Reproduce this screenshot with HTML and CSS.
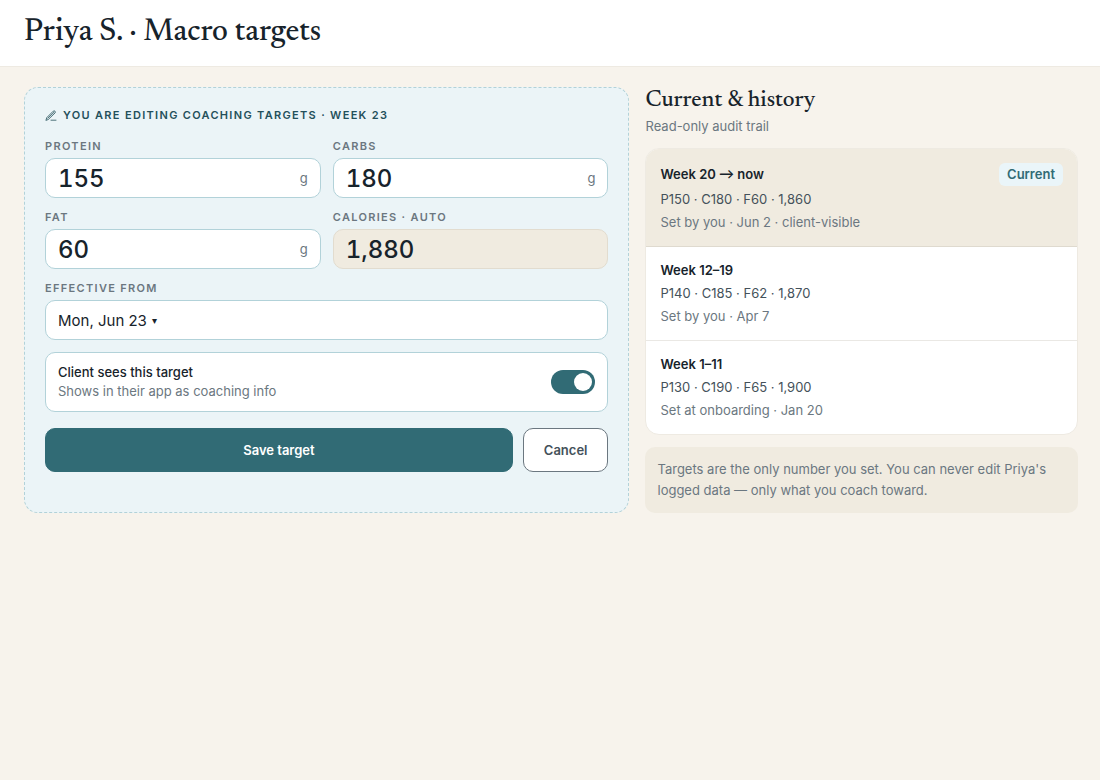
FILE: index.html
```html
<!DOCTYPE html>
<html lang="en">
<head>
    <meta charset="UTF-8">
    <meta name="viewport" content="width=device-width, initial-scale=1.0">
    <title>Priya S. · Macro targets</title>
    <link rel="stylesheet" href="styles.css">
</head>
<body>
    <header class="page-header">
        <h1>Priya S. · Macro targets</h1>
    </header>

    <main class="layout">
        <!-- Target editor -->
        <form class="editor">
            <h2 class="editor-title">
                <svg class="pen-icon" viewBox="0 0 12 12" aria-hidden="true">
                    <path d="M1 10 L1.8 7.6 L8.2 1.2 Q9.2 0.5 10 1.2 Q10.7 2 10 3 L3.5 9.3 Z M2.8 8.2 L8.8 2.4 M6 10.2 H11"/>
                </svg>
                You are editing coaching targets · Week 23
            </h2>

            <div class="fields">
                <div class="field">
                    <label for="protein">Protein</label>
                    <div class="input-box">
                        <input type="text" inputmode="numeric" id="protein" value="155">
                        <span class="unit">g</span>
                    </div>
                </div>
                <div class="field">
                    <label for="carbs">Carbs</label>
                    <div class="input-box">
                        <input type="text" inputmode="numeric" id="carbs" value="180">
                        <span class="unit">g</span>
                    </div>
                </div>
                <div class="field">
                    <label for="fat">Fat</label>
                    <div class="input-box">
                        <input type="text" inputmode="numeric" id="fat" value="60">
                        <span class="unit">g</span>
                    </div>
                </div>
                <div class="field">
                    <label for="calories">Calories · auto</label>
                    <div class="input-box auto">
                        <input type="text" id="calories" value="1,880" readonly>
                    </div>
                </div>
                <div class="field wide">
                    <label for="effective">Effective from</label>
                    <div class="input-box">
                        <select class="date-select" id="effective">
                            <option>Mon, Jun 23</option>
                        </select>
                        <span class="caret" aria-hidden="true">▾</span>
                    </div>
                </div>
            </div>

            <div class="visibility">
                <label for="visible">
                    <span class="visibility-title">Client sees this target</span>
                    <span class="visibility-hint">Shows in their app as coaching info</span>
                </label>
                <input type="checkbox" class="toggle" id="visible" checked>
            </div>

            <div class="actions">
                <button type="submit" class="btn btn-primary">Save target</button>
                <button type="button" class="btn btn-secondary">Cancel</button>
            </div>
        </form>

        <!-- Audit trail -->
        <section class="history">
            <h2>Current &amp; history</h2>
            <p class="subtitle">Read-only audit trail</p>

            <ul class="history-list">
                <li class="history-item current">
                    <div class="history-head">
                        <h3>Week 20 <span class="arrow">→</span> now</h3>
                        <span class="badge">Current</span>
                    </div>
                    <p class="macros">P150 · C180 · F60 · 1,860</p>
                    <p class="meta">Set by you · Jun 2 · client-visible</p>
                </li>
                <li class="history-item">
                    <h3>Week 12–19</h3>
                    <p class="macros">P140 · C185 · F62 · 1,870</p>
                    <p class="meta">Set by you · Apr 7</p>
                </li>
                <li class="history-item">
                    <h3>Week 1–11</h3>
                    <p class="macros">P130 · C190 · F65 · 1,900</p>
                    <p class="meta">Set at onboarding · Jan 20</p>
                </li>
            </ul>

            <p class="note">Targets are the only number you set. You can never edit Priya's logged data — only what you coach toward.</p>
        </section>
    </main>
</body>
</html>
```
FILE: styles.css
```css
* {
    margin: 0;
    padding: 0;
    box-sizing: border-box;
}

body {
    font-family: 'Inter', sans-serif;
    font-size: 13px;
    line-height: 23px;
    background: #f7f3ec;
    color: #17232b;
}

input,
select,
button {
    font-family: inherit;
    color: inherit;
}

.page-header {
    background: #fff;
    border-bottom: 1px solid #eeeae2;
    padding: 15px 24px;
}

.page-header h1 {
    font-family: 'Newsreader', 'Liberation Serif', serif;
    font-size: 31px;
    font-weight: 500;
    line-height: 36px;
}

.layout {
    display: grid;
    grid-template-columns: minmax(0, 1.4fr) minmax(0, 1fr);
    gap: 16px;
    padding: 20px 22px 20px 24px;
}

/* Editor */
.editor {
    background: #ebf4f7;
    border: 1px dashed #b2d2d9;
    border-radius: 14px;
    padding: 20px;
}

.editor-title {
    display: flex;
    align-items: center;
    gap: 6px;
    margin-bottom: 16px;
    font-size: 11px;
    font-weight: 600;
    line-height: 15px;
    letter-spacing: 0.12em;
    text-transform: uppercase;
    color: #24505b;
}

.pen-icon {
    width: 12px;
    height: 12px;
    fill: none;
    stroke: currentColor;
    stroke-width: 0.8;
    stroke-linecap: round;
    stroke-linejoin: round;
}

.fields {
    display: grid;
    grid-template-columns: repeat(2, minmax(0, 1fr));
    gap: 12px;
}

.field {
    display: flex;
    flex-direction: column;
    gap: 4px;
}

.field.wide {
    grid-column: 1 / -1;
}

.field label {
    font-size: 11px;
    font-weight: 600;
    line-height: 15px;
    letter-spacing: 0.12em;
    text-transform: uppercase;
    color: #6b7780;
}

.input-box {
    display: flex;
    align-items: center;
    height: 40px;
    padding: 0 12px;
    background: #fff;
    border: 1px solid #b2d2d9;
    border-radius: 10px;
}

.input-box.auto {
    background: #f0ebe0;
    border-color: #e2dccf;
}

.input-box input {
    flex: 1;
    min-width: 0;
    border: none;
    outline: none;
    background: transparent;
    font-size: 24px;
    font-weight: 500;
    font-variant-numeric: tabular-nums;
}

.unit {
    color: #6b7780;
}

.date-select {
    appearance: none;
    field-sizing: content;
    border: none;
    outline: none;
    background: transparent;
    font-size: 15px;
}

.caret {
    margin-left: 5px;
    font-size: 10px;
}

.visibility {
    display: flex;
    align-items: center;
    justify-content: space-between;
    margin: 12px 0 16px;
    padding: 10px 12px;
    background: #fff;
    border: 1px solid #b2d2d9;
    border-radius: 10px;
    line-height: 19px;
}

.visibility-title,
.visibility-hint {
    display: block;
}

.visibility-title {
    font-weight: 500;
}

.visibility-hint {
    color: #6b7780;
}

.toggle {
    appearance: none;
    display: flex;
    width: 44px;
    height: 24px;
    padding: 3px;
    background: #c3ccd0;
    border-radius: 12px;
    cursor: pointer;
}

.toggle::before {
    content: '';
    width: 18px;
    height: 18px;
    background: #fff;
    border-radius: 50%;
}

.toggle:checked {
    justify-content: flex-end;
    background: #316b75;
}

.actions {
    display: flex;
    gap: 10px;
}

.btn {
    height: 44px;
    padding: 0 20px;
    border: 1px solid #316b75;
    border-radius: 10px;
    font-size: 13px;
    font-weight: 600;
    cursor: pointer;
}

.btn-primary {
    flex: 1;
    background: #316b75;
    color: #fff;
}

.btn-secondary {
    background: #fff;
    border-color: #6b7780;
    color: #44515a;
}

/* History */
.history h2 {
    font-family: 'Newsreader', 'Liberation Serif', serif;
    font-size: 23px;
    font-weight: 500;
    line-height: 28px;
}

.subtitle {
    margin-bottom: 10px;
    color: #6b7780;
}

.history-list {
    list-style: none;
    overflow: hidden;
    background: #fff;
    border: 1px solid #eeeae2;
    border-radius: 14px;
}

.history-item {
    padding: 12px 14px;
}

.history-item + .history-item {
    border-top: 1px solid #eae8e4;
}

.history-item.current {
    background: #f0ebe0;
}

.history-item.current + .history-item {
    border-top-color: #dfdacf;
}

.history-head {
    display: flex;
    align-items: center;
    justify-content: space-between;
    height: 27px;
}

.history-item h3 {
    font-size: 13px;
    font-weight: 600;
}

.arrow {
    font-family: 'Lato', sans-serif;
    font-size: 15px;
    line-height: 1;
}

.macros {
    color: #44515a;
}

.meta {
    color: #6b7780;
}

.badge {
    padding: 0 8px;
    background: #eaf5f9;
    border-radius: 6px;
    font-weight: 600;
    color: #316b75;
}

.note {
    margin-top: 12px;
    padding: 12px;
    background: #f0ebe0;
    border-radius: 10px;
    line-height: 21px;
    color: #6b7780;
}
```
